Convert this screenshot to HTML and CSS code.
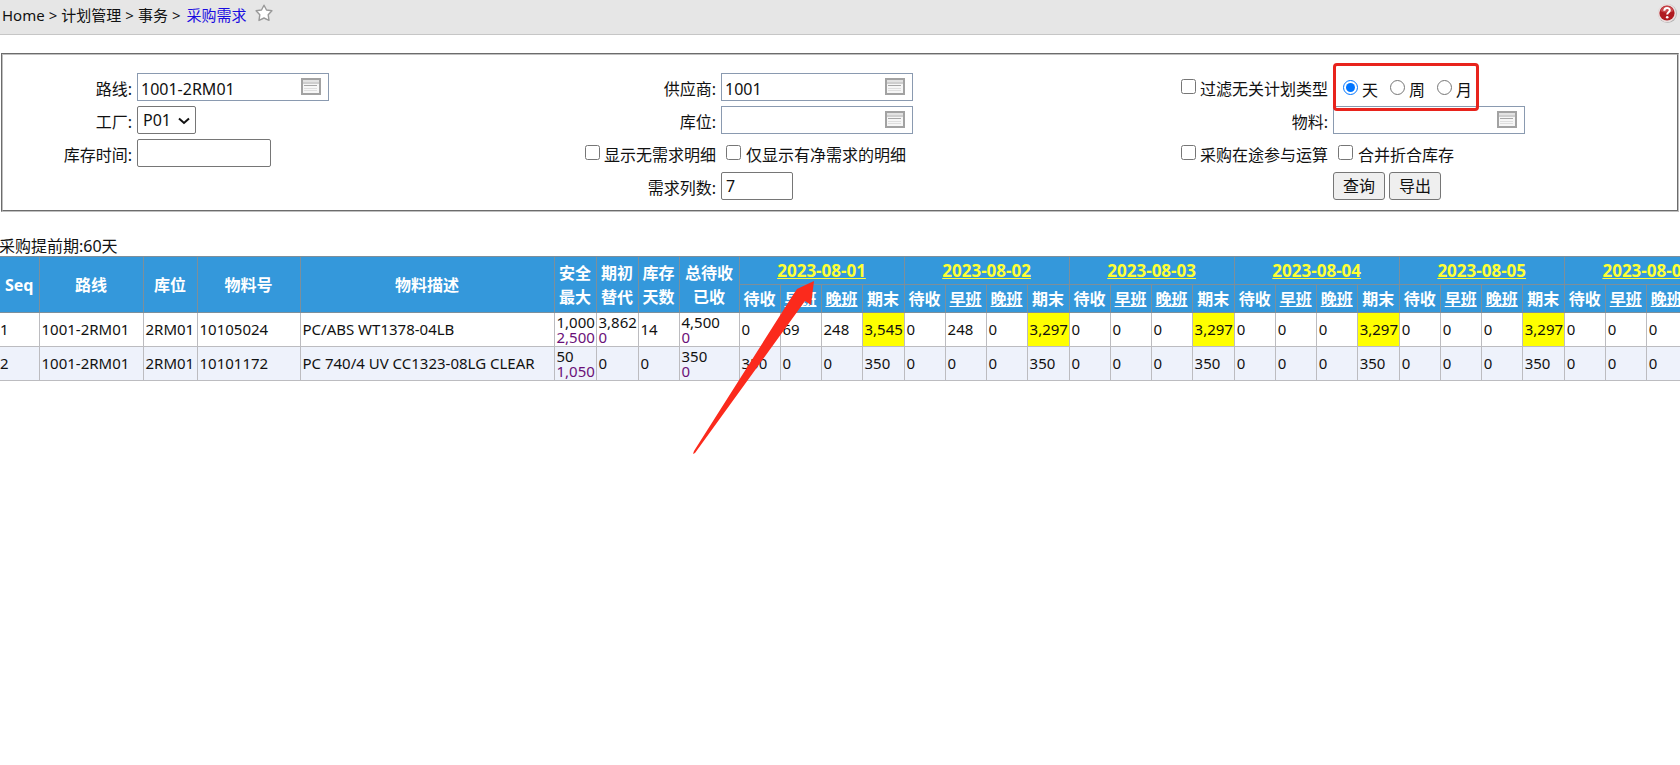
FILE: index.html
```html
<!DOCTYPE html>
<html lang="zh-CN">
<head>
<meta charset="utf-8">
<title>采购需求</title>
<link rel="stylesheet" href="styles.css">
</head>
<body>
<svg class="defs" aria-hidden="true">
  <symbol id="picker" viewBox="0 0 20 17">
    <rect x="1" y="1" width="18" height="15" fill="#f6f6f6" stroke="#a2a2a2" stroke-width="2"/>
    <path d="M2 2h16v2H2z" fill="#e2e2e2"/>
    <path d="M1 5h18" stroke="#a6a6a6"/>
    <path d="M3 7.500h13" stroke="#a6a6a6"/>
    <path d="M3 10.500h13M3 12.500h13" stroke="#dedede"/>
  </symbol>
</svg>
<header class="topbar">
  <nav class="crumbs">
    <span>Home</span><span>&gt;</span><span>计划管理</span><span>&gt;</span><span>事务</span><span>&gt;</span><a href="#">采购需求</a>
    <button class="icon-btn" type="button" aria-label="收藏"><svg width="18" height="18" viewBox="0 0 18 18"><path d="M9 1.200L11.500 6L16.900 6.800L13.200 10.800L14 16.400L9 14L4 16.400L4.800 10.800L1.100 6.800L6.500 6Z" fill="#fff" stroke="#999" stroke-width="1.400" stroke-linejoin="round"/></svg></button>
  </nav>
  <button class="icon-btn" type="button" aria-label="帮助"><svg width="20" height="20" viewBox="0 0 20 20"><circle cx="10.500" cy="10.500" r="9.400" fill="#b4b4b4"/><circle cx="10" cy="10" r="9.200" fill="#e9dede"/><circle cx="10" cy="10" r="7.600" fill="#b01a20"/><path d="M3.500 8a6.700 6.700 0 0 1 13 0c-4 2-9 2-13 0z" fill="#c9484c"/><path d="M7.300 7.800c0-3.800 5.500-3.600 5.500-.6 0 2-2.600 2-2.600 4.400" fill="none" stroke="#fff" stroke-width="2"/><circle cx="10.200" cy="14.300" r="1.300" fill="#fff"/></svg></button>
</header>

<form>
<fieldset class="filters">
  <label class="lab" for="route">路线:</label>
  <div class="cell"><div class="combo"><input id="route" type="text" value="1001-2RM01"><svg class="pick"><use href="#picker"/></svg></div></div>
  <label class="lab" for="supplier">供应商:</label>
  <div class="cell"><div class="combo"><input id="supplier" type="text" value="1001"><svg class="pick"><use href="#picker"/></svg></div></div>
  <div class="lab"><label class="opt"><input type="checkbox"><span>过滤无关计划类型</span></label></div>
  <div class="cell"><div class="period">
    <label class="opt"><input type="radio" name="period" checked><span>天</span></label>
    <label class="opt"><input type="radio" name="period"><span>周</span></label>
    <label class="opt"><input type="radio" name="period"><span>月</span></label>
  </div></div>

  <label class="lab" for="plant">工厂:</label>
  <div class="cell"><div class="drop"><select id="plant"><option>P01</option></select><svg class="chev" viewBox="0 0 12 8"><path d="M1 1.500l5 4.500l5-4.500" fill="none" stroke="#111" stroke-width="2"/></svg></div></div>
  <label class="lab" for="loc">库位:</label>
  <div class="cell"><div class="combo"><input id="loc" type="text"><svg class="pick"><use href="#picker"/></svg></div></div>
  <label class="lab" for="item">物料:</label>
  <div class="cell"><div class="combo"><input id="item" type="text"><svg class="pick"><use href="#picker"/></svg></div></div>

  <label class="lab" for="time">库存时间:</label>
  <div class="cell"><input id="time" class="box" type="text"></div>
  <div class="lab"><label class="opt"><input type="checkbox"><span>显示无需求明细</span></label></div>
  <div class="cell"><label class="opt lead"><input type="checkbox"><span>仅显示有净需求的明细</span></label></div>
  <div class="lab"><label class="opt"><input type="checkbox"><span>采购在途参与运算</span></label></div>
  <div class="cell"><label class="opt lead"><input type="checkbox"><span>合并折合库存</span></label></div>

  <label class="lab third" for="cols">需求列数:</label>
  <div class="cell"><input id="cols" class="box short" type="text" value="7"></div>
  <div class="cell last"><button class="btn" type="button">查询</button><button class="btn" type="button">导出</button></div>
</fieldset>
</form>

<p class="lead-time">采购提前期:60天</p>
<div class="grid-wrap">
<table class="grid">
  <colgroup><col class="w-seq"><col class="w-route"><col class="w-loc"><col class="w-item"><col class="w-desc"><col class="w-q"><col class="w-q"><col class="w-n"><col class="w-total"></colgroup>
  <colgroup id="dayCols"></colgroup>
  <thead>
    <tr id="days"><th rowspan="2">Seq</th><th rowspan="2">路线</th><th rowspan="2">库位</th><th rowspan="2">物料号</th><th rowspan="2">物料描述</th><th rowspan="2">安全<br>最大</th><th rowspan="2">期初<br>替代</th><th rowspan="2">库存<br>天数</th><th rowspan="2">总待收<br>已收</th></tr>
    <tr id="shifts"></tr>
  </thead>
  <tbody>
    <tr id="r1"><td>1</td><td>1001-2RM01</td><td>2RM01</td><td>10105024</td><td>PC/ABS WT1378-04LB</td><td class="two">1,000<a href="#">2,500</a></td><td class="two">3,862<a href="#">0</a></td><td>14</td><td class="two">4,500<a href="#">0</a></td></tr>
    <tr id="r2"><td>2</td><td>1001-2RM01</td><td>2RM01</td><td>10101172</td><td>PC 740/4 UV CC1323-08LG CLEAR</td><td class="two">50<a href="#">1,050</a></td><td>0</td><td>0</td><td class="two">350<a href="#">0</a></td></tr>
  </tbody>
</table>
</div>
<svg class="arrow" viewBox="0 0 122 174" aria-hidden="true"><path d="M121 0L118 24L112 20L2 172L0 173L1 170L100 14L104 8Z" fill="#fb2a1c"/></svg>
<script src="grid.js"></script>
</body>
</html>
```
FILE: grid.js
```js
const days = ['2023-08-01', '2023-08-02', '2023-08-03', '2023-08-04', '2023-08-05', '2023-08-06', '2023-08-07'];
const rows = {
  r1: [['0', '69', '248', '3,545'], ['0', '248', '0', '3,297']],
  r2: [['350', '0', '0', '350']]
};
const rest = { r1: ['0', '0', '0', '3,297'], r2: ['0', '0', '0', '350'] };

function add(parent, html) {
  document.getElementById(parent).insertAdjacentHTML('beforeend', html);
}

days.forEach((day, i) => {
  add('dayCols', '<col class="w-n"><col class="w-n"><col class="w-n"><col class="w-q">');
  add('days', `<th colspan="4" class="day"><a href="#">${day}</a></th>`);
  add('shifts', '<th>待收</th><th><a href="#">早班</a></th><th><a href="#">晚班</a></th><th>期末</th>');
  for (const id in rows) {
    const values = rows[id][i] || rest[id];
    values.forEach((v, k) => add(id, `<td${id === 'r1' && k === 3 ? ' class="warn"' : ''}>${v}</td>`));
  }
});
```
FILE: styles.css
```css
* { box-sizing: border-box; }
body {
  margin: 0;
  position: relative;
  min-height: 100vh;
  font: 16px/24px "Noto Sans", "Noto Sans CJK SC", sans-serif;
  color: #111;
  background: #fff;
}
input, select, button { font: inherit; color: inherit; margin: 0; }
.defs { position: absolute; width: 0; height: 0; }

.topbar {
  display: flex;
  justify-content: space-between;
  align-items: flex-start;
  height: 35px;
  padding: 3px 3px 0 2px;
  background: #e6e6e6;
  border-bottom: 1px solid #c6c6c6;
}
.crumbs { display: flex; gap: 4px; font-size: 15px; }
.crumbs a { margin-left: 2px; color: #1a0ce0; text-decoration: none; }
.icon-btn { display: block; padding: 0; border: 0; background: none; line-height: 0; }
.crumbs .icon-btn { align-self: flex-start; margin: 1px 0 0 4px; }

.filters {
  display: grid;
  grid-template-columns: 131fr 431fr 147fr 446fr 160fr 344fr;
  grid-auto-rows: 28px;
  gap: 5px 3px;
  margin: 18px 1px 0;
  padding: 18px 0 10px;
  border: 2px groove #c0c0c0;
  min-width: 0;
}
.lab { display: flex; justify-content: flex-end; align-items: center; padding: 4px 2px 0 0; white-space: nowrap; }
.cell { display: flex; align-items: center; gap: 4px; white-space: nowrap; }
.third { grid-column: 3; }
.last { grid-column: 6; }
.combo { position: relative; width: 192px; height: 28px; }
.combo input { width: 100%; height: 100%; padding: 3px 32px 0 3px; border: 1px solid #8a9ab0; background: #fff; }
.pick { position: absolute; right: 8px; top: 5px; width: 20px; height: 17px; }
.box { width: 134px; height: 28px; padding: 0 4px; border: 1px solid #767676; border-radius: 2px; }
.short { width: 72px; }
.drop { position: relative; width: 59px; height: 28px; }
.drop select { appearance: none; width: 100%; height: 100%; padding: 0 5px; border: 1px solid #767676; border-radius: 2px; background: #fff; }
.chev { position: absolute; right: 6px; top: 11px; width: 12px; height: 8px; pointer-events: none; }
.opt { display: flex; align-items: flex-start; gap: 4px; }
.opt input { width: 15px; height: 15px; margin-top: 2px; }
.cell .lead { padding: 4px 0 0 5px; gap: 5px; }
.period {
  display: flex;
  gap: 12px;
  height: 48px;
  padding: 12px 4px 0 7px;
  border: 3px solid #e8231c;
  border-radius: 4px;
  z-index: 1;
}
.btn { height: 28px; padding: 0 9px; border: 1px solid #767676; border-radius: 3px; background: #efefef; }

.lead-time { margin: 24px 0 0 -1px; line-height: 20px; }
.grid-wrap { overflow: hidden; }
.grid { table-layout: fixed; width: 1895px; border-collapse: collapse; font-size: 15px; }
.w-seq { width: 39px; }
.w-route { width: 104px; }
.w-loc { width: 54px; }
.w-item { width: 103px; }
.w-desc { width: 254px; }
.w-q { width: 42px; }
.w-n { width: 41px; }
.w-total { width: 60px; }
.grid th { padding: 0; border: 1px solid #7d8f9b; background: #3498db; color: #fff; font-size: 16px; height: 28px; white-space: nowrap; }
.grid th a { color: inherit; }
.grid .day a { color: #ff3; font-size: 17px; }
.grid td { height: 34px; padding: 0 0 0 2px; border: 1px solid #bcbcc0; line-height: 15px; white-space: nowrap; }
.grid tr > :first-child { border-left: 0; }
.grid #shifts > :first-child { border-left: 1px solid #7d8f9b; }
.grid td:first-child { padding-left: 0; }
.grid tbody tr:nth-child(2) { background: #eef2fb; }
.grid .warn { background: #ff0; }
.two a { display: block; color: #6a1078; text-decoration: none; }

.arrow { position: absolute; left: 693px; top: 281px; width: 122px; height: 174px; pointer-events: none; }
```
